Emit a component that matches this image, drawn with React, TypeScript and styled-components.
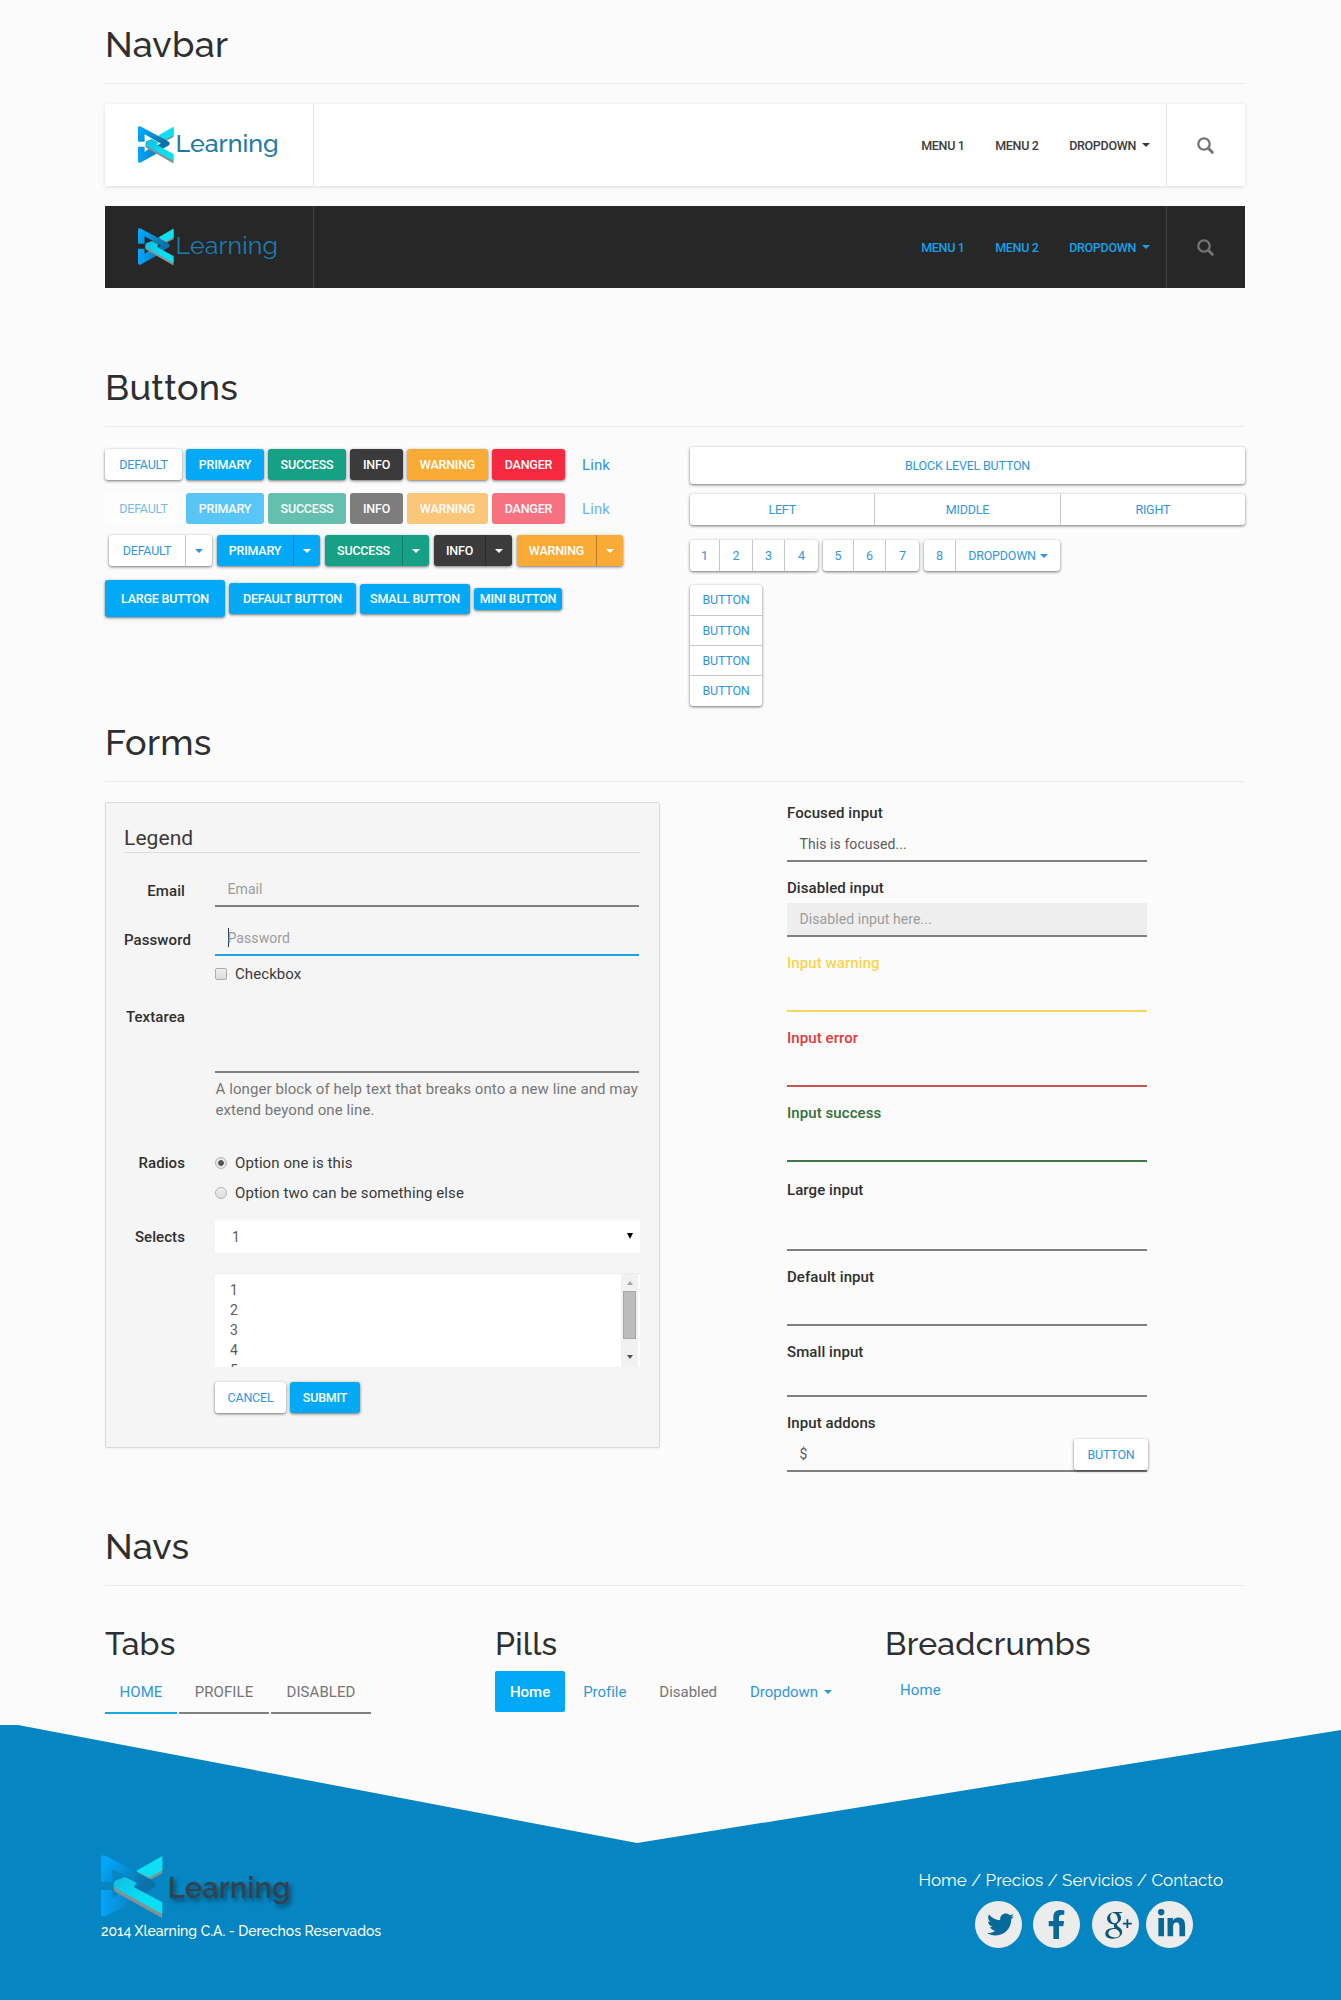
import React from 'react';
import styled, { createGlobalStyle, css } from 'styled-components';
import { TiSocialGooglePlus } from 'react-icons/ti';
import { FaTwitter, FaFacebookF, FaLinkedinIn } from 'react-icons/fa';

const display = '"Raleway", "Lato", sans-serif';
const blue = '#2f96dd';
const primary = '#03a9f4';

const GlobalStyle = createGlobalStyle`
  * { box-sizing: border-box; }
  body {
    margin: 0;
    background: #fbfbfb;
    font-family: Roboto, "Liberation Sans", sans-serif;
    font-size: 15px;
    letter-spacing: 0.08px;
    color: #3a3a3a;
  }
`;

const Page = styled.div`
  width: 1341px;
  height: 2000px;
  padding-top: 23px;
  overflow: hidden;
`;

const Section = styled.section<{ $height: number }>`
  width: 1140px;
  height: ${(p) => p.$height}px;
  margin-left: 105px;
`;

const Heading = styled.h2`
  height: 61px;
  margin: 0;
  border-bottom: 1px solid #ececec;
  font: 500 36px/42px ${display};
  letter-spacing: 0.25px;
  color: #2e2f31;
`;

const SubHeading = styled.h3`
  margin: 39px 0 9px;
  font: 500 32px/37px ${display};
  letter-spacing: 0.25px;
  color: #2e2f31;
`;

const Caret = styled.span<{ $gap?: number }>`
  flex: none;
  margin-left: ${(p) => p.$gap ?? 0}px;
  border: 4px solid transparent;
  border-top-color: currentColor;
  border-bottom: 0;
`;

/* ---------- navbar ---------- */

const Navbars = styled.div`
  display: flex;
  flex-direction: column;
  gap: 20px;
  padding-top: 20px;
`;

const Bar = styled.nav<{ $dark?: boolean }>`
  display: flex;
  height: 82px;
  background: ${(p) => (p.$dark ? '#272727' : '#fff')};
  color: ${(p) => (p.$dark ? '#12a2e8' : '#3b3b3b')};
  box-shadow: ${(p) => (p.$dark ? 'none' : '0 1px 4px rgba(0, 0, 0, 0.12)')};
  --rule: ${(p) => (p.$dark ? '#414141' : '#e2e2e2')};
`;

const Brand = styled.a`
  display: flex;
  align-items: flex-start;
  width: 209px;
  padding: 22px 0 0 33px;
  border-right: 1px solid var(--rule);
`;

const BrandName = styled.span<{ $dark?: boolean }>`
  margin: 1px 0 0 1.5px;
  font: ${(p) => (p.$dark ? 400 : 500)} 25px/32px ${display};
  letter-spacing: ${(p) => (p.$dark ? 0.15 : 0)}px;
  color: ${(p) => (p.$dark ? '#1b7cb1' : '#2179a3')};
`;

const Menu = styled.div`
  display: flex;
  align-items: center;
  gap: 30.5px;
  margin-left: auto;
  padding-right: 16px;
  border-right: 1px solid var(--rule);
`;

const MenuItem = styled.a`
  display: flex;
  align-items: center;
  font-size: 12.5px;
  font-weight: 500;
  letter-spacing: -0.3px;
`;

const SearchCell = styled.div`
  display: flex;
  align-items: center;
  justify-content: center;
  width: 78px;
  padding-right: 2px;
  color: #747474;
`;

/* ---------- buttons ---------- */

const tones = {
  default: ['#fff', blue],
  primary: [primary, '#fff'],
  success: ['#16a085', '#fff'],
  info: ['#3b3b3b', '#fff'],
  warning: ['#f9ab36', '#fff'],
  danger: ['#f5293f', '#fff'],
} as const;
type Tone = keyof typeof tones;

const Btn = styled.button<{ $tone?: Tone; $w?: number; $h?: number; $off?: boolean }>`
  display: flex;
  align-items: center;
  justify-content: center;
  flex: ${(p) => (p.$w ? 'none' : '1')};
  width: ${(p) => (p.$w ? `${p.$w}px` : 'auto')};
  height: ${(p) => p.$h ?? 31}px;
  padding: 0;
  border: 0;
  border-radius: 3px;
  background: ${(p) => tones[p.$tone ?? 'default'][0]};
  color: ${(p) => tones[p.$tone ?? 'default'][1]};
  font: ${(p) => ((p.$tone ?? 'default') === 'default' ? 400 : 500)} 12.5px/20px Roboto, sans-serif;
  letter-spacing: -0.2px;
  box-shadow: 0 1px 3px rgba(0, 0, 0, 0.55);
  ${(p) => p.$off && css`
    box-shadow: none;
    opacity: 0.65;
  `}
`;

const TextLink = styled.a<{ $off?: boolean }>`
  margin-left: 13px;
  color: ${blue};
  line-height: 20px;
  opacity: ${(p) => (p.$off ? 0.7 : 1)};
`;

const ButtonGroup = styled.div<{ $vertical?: boolean; $w?: number; $tone?: Tone }>`
  display: flex;
  flex-direction: ${(p) => (p.$vertical ? 'column' : 'row')};
  width: ${(p) => (p.$w ? `${p.$w}px` : 'auto')};
  border-radius: 3px;
  background: ${(p) => tones[p.$tone ?? 'default'][0]};
  box-shadow: 0 1px 3px rgba(0, 0, 0, 0.55);
  ${Btn} {
    box-shadow: none;
    background: none;
  }
  ${Btn} + ${Btn} {
    border-radius: 0;
    ${(p) => (p.$vertical ? 'border-top' : 'border-left')}: 1px solid
      ${(p) => ((p.$tone ?? 'default') === 'default' ? '#c8c8c8' : 'rgba(0, 0, 0, 0.25)')};
  }
`;

const Split = styled.div`
  display: flex;
`;

const ButtonsLeft = styled.div`
  width: 585px;
  padding-top: 22px;
`;

const ButtonsRight = styled.div`
  display: flex;
  flex-direction: column;
  width: 555px;
  padding-top: 20px;
`;

const Row = styled.div<{ $gap?: number; $top?: number; $left?: number }>`
  display: flex;
  align-items: center;
  gap: ${(p) => p.$gap ?? 4}px;
  margin-top: ${(p) => p.$top ?? 0}px;
  margin-left: ${(p) => p.$left ?? 0}px;
`;

/* ---------- forms ---------- */

const Panel = styled.div`
  width: 555px;
  height: 646px;
  margin-top: 20px;
  padding: 20px 19px 0 18px;
  border: 1px solid #d9dadb;
  border-radius: 2px;
  background: #f5f5f5;
  box-shadow: 0 1px 2px rgba(0, 0, 0, 0.05);
`;

const Legend = styled.div`
  height: 30px;
  margin-bottom: 20px;
  border-bottom: 1px solid #dedede;
  font-size: 21px;
  line-height: 30px;
`;

const FormRow = styled.div<{ $top?: number }>`
  display: grid;
  grid-template-columns: 91px 424px;
  margin-top: ${(p) => p.$top ?? 0}px;
`;

const RowLabel = styled.label`
  width: 61px;
  padding-top: 1px;
  line-height: 34px;
  font-weight: 500;
  text-align: right;
  white-space: nowrap;
  color: #2f2f2f;
`;

const Field = styled.div<{ $h?: number; $line?: string; $disabled?: boolean; $muted?: boolean }>`
  display: flex;
  height: ${(p) => p.$h ?? 34}px;
  padding-left: 12.5px;
  border-bottom: 2px solid ${(p) => p.$line ?? '#808080'};
  background: ${(p) => (p.$disabled ? '#eee' : 'transparent')};
  font-size: 14px;
  line-height: 32px;
  color: ${(p) => (p.$muted ? '#9c9c9c' : '#5c5c5c')};
`;

const TextCursor = styled.i`
  width: 1px;
  height: 19px;
  margin: 6px -1px 0 0;
  background: #333;
`;

const Choice = styled.label<{ $top: number }>`
  display: flex;
  align-items: center;
  gap: 8px;
  height: 24px;
  margin-top: ${(p) => p.$top}px;
  line-height: 24px;
`;

const CheckMark = styled.i`
  width: 12px;
  height: 12px;
  border: 1px solid #adadad;
  border-radius: 2px;
  background: linear-gradient(#efefef, #dcdcdc);
`;

const RadioMark = styled.i<{ $on?: boolean }>`
  width: 12px;
  height: 12px;
  border: 1px solid #b4b4b4;
  border-radius: 50%;
  background: ${(p) =>
    p.$on ? 'radial-gradient(circle, #555 0 2.5px, #e6e6e6 3.2px)' : 'linear-gradient(#efefef, #dcdcdc)'};
`;

const Help = styled.p`
  margin: 6px -2px 0 0.5px;
  line-height: 21px;
  letter-spacing: 0.085px;
  color: #777;
`;

const Select = styled.div`
  display: flex;
  justify-content: space-between;
  align-items: center;
  width: 425px;
  height: 34px;
  padding: 0 7px 0 17px;
  border-top: 2px solid #fafafa;
  background: #fff;
  font-size: 14px;
  color: #5c5c5c;
`;

const SelectArrow = styled.i`
  margin-bottom: 3px;
  border: 3.5px solid transparent;
  border-top: 6px solid #000;
  border-bottom: 0;
`;

const ListBox = styled.div`
  display: flex;
  justify-content: space-between;
  width: 425px;
  height: 94px;
  margin-top: 20px;
  padding-right: 2px;
  overflow: hidden;
  background: #fff;
  border-top: 1px solid #eee;
`;

const Options = styled.div`
  padding: 6px 0 0 15px;
  font-size: 14px;
  line-height: 20px;
  color: #5c5c5c;
`;

const Scrollbar = styled.div`
  display: flex;
  flex-direction: column;
  align-items: center;
  width: 17px;
  height: 93px;
  padding: 7px 0;
  background: #f1f1f1;
`;

const ScrollArrow = styled.i<{ $up?: boolean }>`
  border: 3.5px solid transparent;
  ${(p) => (p.$up ? 'border-bottom: 4px solid #a3a3a3; border-top: 0;' : 'border-top: 4px solid #505050; border-bottom: 0;')}
`;

const Thumb = styled.i`
  width: 13px;
  height: 48px;
  margin: 6px 0 16px;
  border: 1px solid #a8a8a8;
  background: #bcbcbc;
`;

const Inputs = styled.div`
  width: 360px;
  margin: 20px 0 0 127px;
`;

const Group = styled.div<{ $top?: number; $color?: string }>`
  margin-top: ${(p) => p.$top ?? 15}px;
  &:first-child { margin-top: 0; }
  > label {
    display: block;
    height: 26px;
    line-height: 23px;
    font-weight: 500;
    color: ${(p) => p.$color ?? '#2f2f2f'};
  }
`;

const Addon = styled.div`
  display: flex;
  justify-content: space-between;
  flex: 1;
`;

const AddonButton = styled.div`
  display: flex;
  padding-top: 1px;
  margin-right: -1px;
`;

/* ---------- navs ---------- */

const Columns = styled.div`
  display: grid;
  grid-template-columns: 390px 390px 1fr;
`;

const Tabs = styled.div`
  display: flex;
  gap: 2px;
`;

const Tab = styled.a<{ $w: number; $active?: boolean }>`
  width: ${(p) => p.$w}px;
  height: 43px;
  border-bottom: 2px solid ${(p) => (p.$active ? '#1ba6e3' : '#808080')};
  line-height: 42px;
  text-align: center;
  color: ${(p) => (p.$active ? blue : '#757575')};
`;

const Pills = styled.div`
  display: flex;
  gap: 3px;
`;

const Pill = styled.a<{ $active?: boolean; $muted?: boolean }>`
  display: flex;
  align-items: center;
  height: 41px;
  padding: 0 15px;
  border-radius: 2px;
  background: ${(p) => (p.$active ? primary : 'transparent')};
  font-weight: ${(p) => (p.$active ? 500 : 400)};
  letter-spacing: -0.03px;
  color: ${(p) => (p.$active ? '#fff' : p.$muted ? '#757575' : blue)};
`;

const Crumb = styled.a`
  display: block;
  padding-left: 15px;
  line-height: 38px;
  color: ${blue};
`;

/* ---------- footer ---------- */

const Footer = styled.footer`
  display: flex;
  justify-content: space-between;
  height: 275px;
  padding: 130px 118px 0 101px;
  background: #0585c1;
  clip-path: polygon(0 0, 18px 0, 637px 118px, 100% 5px, 100% 100%, 0 100%);
  color: #fff;
`;

const FooterBrand = styled.div`
  display: flex;
  align-items: flex-start;
  height: 66px;
`;

const FooterName = styled.span`
  margin: 16px 0 0 5px;
  font: 600 29px/34px ${display};
  letter-spacing: 0.2px;
  color: #34424e;
  text-shadow: 2px 3px 4px rgba(0, 0, 0, 0.45);
`;

const Copyright = styled.div`
  font: 500 14px/20px ${display};
  letter-spacing: 0;
`;

const FooterLinks = styled.div`
  padding-top: 13px;
  font: 400 17px/24px ${display};
  letter-spacing: 0;
  white-space: nowrap;
`;

const Socials = styled.div`
  display: flex;
  margin: 9px 0 0 56px;
`;

const Social = styled.a<{ $left?: number; $shift?: number; $color?: string }>`
  display: flex;
  align-items: center;
  justify-content: center;
  width: 47px;
  height: 47px;
  margin-left: ${(p) => p.$left ?? 0}px;
  padding-left: ${(p) => p.$shift ?? 0}px;
  border-radius: 50%;
  background: #ececec;
  color: ${(p) => p.$color ?? '#07699a'};
`;

function Logo({ width, height, id }: { width: number; height: number; id: string }) {
  return (
    <svg width={width} height={height} viewBox="0 0 186 192" preserveAspectRatio="none">
      <defs>
        <linearGradient id={`${id}a`} x1="0" y1="0" x2="1" y2="0.6">
          <stop offset="0.15" stopColor="#03a6fa" />
          <stop offset="0.9" stopColor="#0b72a8" />
        </linearGradient>
        <linearGradient id={`${id}b`} x1="0" y1="0" x2="1" y2="0">
          <stop offset="0" stopColor="#03a6fa" />
          <stop offset="1" stopColor="#0b80c0" />
        </linearGradient>
        <linearGradient id={`${id}c`} x1="0" y1="0" x2="1" y2="1">
          <stop offset="0" stopColor="#12bde0" />
          <stop offset="0.6" stopColor="#08dff5" />
        </linearGradient>
      </defs>
      <path d="M105 56L184 14V55L145 76Z" fill="#8a8f90" />
      <path d="M105 48L184 3V45L145 68Z" fill="#0ce0f2" />
      <path d="M0 105H34V130L62 112L100 138L14 184Q0 188 0 178Z" fill={`url(#${id}b)`} />
      <path d="M0 8Q0-2 14 2L158 78Q170 88 158 99L122 119L90 102L118 88L34 42V80H0Z" fill={`url(#${id}a)`} />
      <path d="M40 88L183 156V189L42 110Q34 100 40 88Z" fill="#8a8f90" />
      <path d="M42 77L72 66L106 83L98 96L184 142V177L42 100Q34 86 42 77Z" fill={`url(#${id}c)`} />
    </svg>
  );
}

function NavbarRow({ dark }: { dark?: boolean }) {
  return (
    <Bar $dark={dark}>
      <Brand>
        <Logo width={36} height={38} id={dark ? 'dark' : 'light'} />
        <BrandName $dark={dark}>Learning</BrandName>
      </Brand>
      <Menu>
        <MenuItem>MENU 1</MenuItem>
        <MenuItem>MENU 2</MenuItem>
        <MenuItem>DROPDOWN<Caret $gap={6} /></MenuItem>
      </Menu>
      <SearchCell>
        <svg width="17" height="17" viewBox="0 0 17 17" fill="none" stroke="currentColor">
          <circle cx="7" cy="7" r="5.7" strokeWidth="2.3" />
          <path d="M11.3 11.3L15.3 15.3" strokeWidth="3" strokeLinecap="round" />
        </svg>
      </SearchCell>
    </Bar>
  );
}

const swatches: [string, Tone, number][] = [
  ['DEFAULT', 'default', 77],
  ['PRIMARY', 'primary', 78],
  ['SUCCESS', 'success', 78],
  ['INFO', 'info', 53],
  ['WARNING', 'warning', 81],
  ['DANGER', 'danger', 73],
];

const splits: [string, Tone, number][] = [
  ['DEFAULT', 'default', 76],
  ['PRIMARY', 'primary', 76],
  ['SUCCESS', 'success', 77],
  ['INFO', 'info', 51],
  ['WARNING', 'warning', 79],
];

const toolbar: [string, number][][] = [
  [['1', 29], ['2', 33], ['3', 32], ['4', 34]],
  [['5', 30], ['6', 32], ['7', 34]],
  [['8', 31], ['DROPDOWN', 105]],
];

export default function App() {
  return (
    <Page>
      <GlobalStyle />
      <Section $height={343}>
        <Heading>Navbar</Heading>
        <Navbars>
          <NavbarRow />
          <NavbarRow dark />
        </Navbars>
      </Section>

      <Section $height={355}>
        <Heading>Buttons</Heading>
        <Split>
          <ButtonsLeft>
            <Row>
              {swatches.map(([t, tone, w]) => <Btn key={t} $tone={tone} $w={w}>{t}</Btn>)}
              <TextLink>Link</TextLink>
            </Row>
            <Row $top={13}>
              {swatches.map(([t, tone, w]) => <Btn key={t} $tone={tone} $w={w} $off>{t}</Btn>)}
              <TextLink $off>Link</TextLink>
            </Row>
            <Row $top={11} $left={4} $gap={5}>
              {splits.map(([t, tone, w]) => (
                <ButtonGroup key={t} $tone={tone}>
                  <Btn $tone={tone} $w={w}>{t}</Btn>
                  <Btn $tone={tone} $w={27}><Caret /></Btn>
                </ButtonGroup>
              ))}
            </Row>
            <Row $top={14}>
              <Btn $tone="primary" $w={120} $h={37}>LARGE BUTTON</Btn>
              <Btn $tone="primary" $w={127}>DEFAULT BUTTON</Btn>
              <Btn $tone="primary" $w={110} $h={30}>SMALL BUTTON</Btn>
              <Btn $tone="primary" $w={88} $h={22}>MINI BUTTON</Btn>
            </Row>
          </ButtonsLeft>
          <ButtonsRight>
            <Row>
              <Btn $h={37}>BLOCK LEVEL BUTTON</Btn>
            </Row>
            <Row $top={10}>
              <ButtonGroup $w={555}>
                <Btn>LEFT</Btn>
                <Btn>MIDDLE</Btn>
                <Btn>RIGHT</Btn>
              </ButtonGroup>
            </Row>
            <Row $top={15} $gap={5}>
              {toolbar.map((group, i) => (
                <ButtonGroup key={i}>
                  {group.map(([t, w]) => (
                    <Btn key={t} $w={w} $h={31}>
                      {t}
                      {t === 'DROPDOWN' && <Caret $gap={4} />}
                    </Btn>
                  ))}
                </ButtonGroup>
              ))}
            </Row>
            <Row $top={14}>
              <ButtonGroup $vertical>
                <Btn $w={72} $h={30}>BUTTON</Btn>
                <Btn $w={72} $h={30}>BUTTON</Btn>
                <Btn $w={72} $h={30}>BUTTON</Btn>
                <Btn $w={72} $h={31}>BUTTON</Btn>
              </ButtonGroup>
            </Row>
          </ButtonsRight>
        </Split>
      </Section>

      <Section $height={804}>
        <Heading>Forms</Heading>
        <Split>
          <Panel>
            <Legend>Legend</Legend>
            <FormRow>
              <RowLabel>Email</RowLabel>
              <Field $muted>Email</Field>
            </FormRow>
            <FormRow $top={14}>
              <RowLabel>Password</RowLabel>
              <div>
                <Field $muted $line="#1ba6e3"><TextCursor />Password</Field>
                <Choice $top={6}><CheckMark />Checkbox</Choice>
              </div>
            </FormRow>
            <FormRow $top={13}>
              <RowLabel>Textarea</RowLabel>
              <div>
                <Field $h={74} />
                <Help>A longer block of help text that breaks onto a new line and may extend beyond one line.</Help>
              </div>
            </FormRow>
            <FormRow $top={24}>
              <RowLabel>Radios</RowLabel>
              <div>
                <Choice $top={6}><RadioMark $on />Option one is this</Choice>
                <Choice $top={6}><RadioMark />Option two can be something else</Choice>
              </div>
            </FormRow>
            <FormRow $top={14}>
              <RowLabel>Selects</RowLabel>
              <div>
                <Select>1<SelectArrow /></Select>
                <ListBox>
                  <Options>
                    {[1, 2, 3, 4, 5].map((n) => <div key={n}>{n}</div>)}
                  </Options>
                  <Scrollbar>
                    <ScrollArrow $up />
                    <Thumb />
                    <ScrollArrow />
                  </Scrollbar>
                </ListBox>
                <Row $top={15}>
                  <Btn $w={71}>CANCEL</Btn>
                  <Btn $tone="primary" $w={70}>SUBMIT</Btn>
                </Row>
              </div>
            </FormRow>
          </Panel>
          <Inputs>
            <Group>
              <label>Focused input</label>
              <Field>This is focused...</Field>
            </Group>
            <Group>
              <label>Disabled input</label>
              <Field $disabled $muted>Disabled input here...</Field>
            </Group>
            <Group $color="#fbd44c">
              <label>Input warning</label>
              <Field $line="#fbd45c" />
            </Group>
            <Group $color="#e0393c">
              <label>Input error</label>
              <Field $line="#c65650" />
            </Group>
            <Group $color="#33703a">
              <label>Input success</label>
              <Field $line="#43754a" />
            </Group>
            <Group $top={17}>
              <label>Large input</label>
              <Field $h={46} />
            </Group>
            <Group>
              <label>Default input</label>
              <Field />
            </Group>
            <Group>
              <label>Small input</label>
              <Field $h={30} />
            </Group>
            <Group>
              <label>Input addons</label>
              <Field>
                <Addon>
                  $
                  <AddonButton><Btn $w={74}>BUTTON</Btn></AddonButton>
                </Addon>
              </Field>
            </Group>
          </Inputs>
        </Split>
      </Section>

      <Section $height={200}>
        <Heading>Navs</Heading>
        <Columns>
          <div>
            <SubHeading>Tabs</SubHeading>
            <Tabs>
              <Tab $w={72} $active>HOME</Tab>
              <Tab $w={90}>PROFILE</Tab>
              <Tab $w={100}>DISABLED</Tab>
            </Tabs>
          </div>
          <div>
            <SubHeading>Pills</SubHeading>
            <Pills>
              <Pill $active>Home</Pill>
              <Pill>Profile</Pill>
              <Pill $muted>Disabled</Pill>
              <Pill>Dropdown<Caret $gap={6} /></Pill>
            </Pills>
          </div>
          <div>
            <SubHeading>Breadcrumbs</SubHeading>
            <Crumb>Home</Crumb>
          </div>
        </Columns>
      </Section>

      <Footer>
        <div>
          <FooterBrand>
            <Logo width={62} height={64} id="foot" />
            <FooterName>Learning</FooterName>
          </FooterBrand>
          <Copyright>2014 Xlearning C.A. - Derechos Reservados</Copyright>
        </div>
        <div>
          <FooterLinks>Home / Precios / Servicios / Contacto</FooterLinks>
          <Socials>
            <Social $shift={5}><FaTwitter size={27} /></Social>
            <Social $left={11}><FaFacebookF size={29} /></Social>
            <Social $left={12} $shift={4} $color="#0a5478"><TiSocialGooglePlus size={47} /></Social>
            <Social $left={7} $shift={5}><FaLinkedinIn size={31} /></Social>
          </Socials>
        </div>
      </Footer>
    </Page>
  );
}
